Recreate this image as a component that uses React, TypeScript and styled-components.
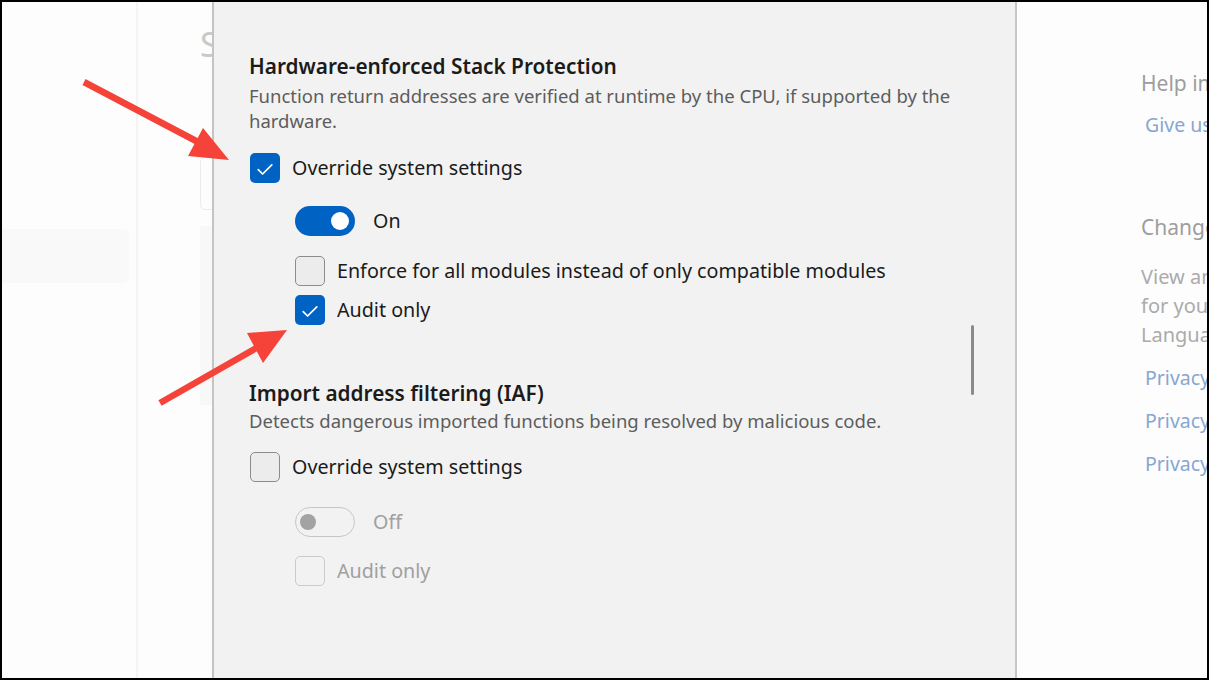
import React from "react";
import styled, { createGlobalStyle } from "styled-components";

const GlobalStyle = createGlobalStyle`
  html, body { margin: 0; padding: 0; background: #000; }
  body { font-family: "Noto Sans", "Open Sans", sans-serif; overflow: hidden; }
  * { box-sizing: border-box; }
`;

const Stage = styled.div`
  position: relative;
  width: 1209px;
  height: 680px;
  overflow: hidden;
`;

const Frame = styled.div`
  width: 100%;
  height: 100%;
  border: 2px solid #000;
  background: #fdfdfd;
  display: grid;
  grid-template-columns: 210px 805px 1fr;
  overflow: hidden;
`;

/* ---------- left backdrop ---------- */
const Backdrop = styled.div`
  display: flex;
  overflow: hidden;
`;

const Nav = styled.nav`
  flex: 0 0 134px;
  padding-top: 227px;
`;

const NavCard = styled.div`
  width: 127px;
  height: 54px;
  background: #f9f9f9;
  border-radius: 0 6px 6px 0;
`;

const Divider = styled.div`
  flex: 0 0 2px;
  background: #f4f4f4;
`;

const Main = styled.main`
  flex: 0 0 420px;
  padding: 22px 0 0 62px;
  display: flex;
  flex-direction: column;
`;

const PageTitle = styled.h1`
  margin: 0;
  font-size: 34px;
  line-height: 40px;
  font-weight: 400;
  color: #c9c9c9;
  white-space: nowrap;
`;

const SearchBox = styled.div`
  margin-top: 93px;
  width: 300px;
  height: 53px;
  border: 1px solid #ececec;
  border-radius: 5px;
`;

const GhostPanel = styled.div`
  margin-top: 16px;
  width: 300px;
  height: 179px;
  background: #f8f8f8;
`;

/* ---------- dialog ---------- */
const Dialog = styled.section`
  position: relative;
  background: #f2f2f2;
  border-left: 2px solid #c4c4c4;
  border-right: 2px solid #c6c6c6;
  padding: 50px 0 0 35px;
  overflow: hidden;
`;

const Section = styled.div<{ $mt?: number }>`
  display: flex;
  flex-direction: column;
  margin-top: ${(p) => p.$mt ?? 0}px;
`;

const Heading = styled.h2`
  margin: 0;
  font-size: 20.8px;
  line-height: 28px;
  font-weight: 600;
  color: #1b1b1b;
`;

const Desc = styled.p<{ $mt?: number }>`
  margin: ${(p) => p.$mt ?? 0}px 0 0;
  max-width: 712px;
  font-size: 18.5px;
  line-height: 25px;
  color: #5d5d5d;
`;

const Sub = styled.div`
  display: flex;
  flex-direction: column;
  padding-left: 46px;
`;

const Row = styled.label<{ $mt?: number; $gap?: number }>`
  display: flex;
  align-items: center;
  gap: ${(p) => p.$gap ?? 12}px;
  margin-top: ${(p) => p.$mt ?? 0}px;
  height: 30px;
`;

const Label = styled.span<{ $disabled?: boolean }>`
  font-size: 19.7px;
  line-height: 30px;
  color: ${(p) => (p.$disabled ? "#a0a0a0" : "#1b1b1b")};
  white-space: nowrap;
`;

const Box = styled.span<{ $checked?: boolean; $disabled?: boolean; $nudge?: number }>`
  flex: 0 0 30px;
  width: 30px;
  height: 30px;
  margin-left: ${(p) => p.$nudge ?? 0}px;
  border-radius: 5px;
  display: flex;
  align-items: center;
  justify-content: center;
  background: ${(p) => (p.$checked ? "#0063c4" : p.$disabled ? "transparent" : "#ececec")};
  border: ${(p) =>
    p.$checked ? "none" : `1.5px solid ${p.$disabled ? "#cbcbcb" : "#8c8c8c"}`};
`;

const Toggle = styled.span<{ $on?: boolean; $disabled?: boolean }>`
  flex: 0 0 60px;
  width: 60px;
  height: 30px;
  border-radius: 15px;
  display: flex;
  align-items: center;
  justify-content: ${(p) => (p.$on ? "flex-end" : "flex-start")};
  padding: ${(p) => (p.$on ? "0 6px" : "0 3.5px")};
  background: ${(p) => (p.$on ? "#0063c4" : "transparent")};
  border: ${(p) =>
    p.$on ? "none" : `1.5px solid ${p.$disabled ? "#c6c6c6" : "#8c8c8c"}`};
`;

const Thumb = styled.span<{ $on?: boolean; $disabled?: boolean }>`
  width: ${(p) => (p.$on ? 18 : 16)}px;
  height: ${(p) => (p.$on ? 18 : 16)}px;
  border-radius: 50%;
  background: ${(p) => (p.$on ? "#ffffff" : p.$disabled ? "#a3a3a3" : "#5d5d5d")};
`;

const Warning = styled.p`
  margin: 87px 0 0;
  font-size: 18.5px;
  line-height: 25px;
  color: #c42b1c;
  white-space: nowrap;
`;

const ScrollThumb = styled.div`
  position: absolute;
  left: 757px;
  top: 323px;
  width: 3px;
  height: 70px;
  border-radius: 2px;
  background: #8a8a8a;
`;

/* ---------- right backdrop ---------- */
const Aside = styled.aside`
  padding: 67px 0 0 124px;
  display: flex;
  flex-direction: column;
  overflow: hidden;
  white-space: nowrap;
`;

const AsideTitle = styled.div<{ $mt?: number }>`
  margin-top: ${(p) => p.$mt ?? 0}px;
  font-size: 21px;
  line-height: 28px;
  color: #9d9d9d;
`;

const AsideText = styled.div<{ $mt?: number }>`
  margin-top: ${(p) => p.$mt ?? 0}px;
  font-size: 20px;
  line-height: 29px;
  color: #ababab;
`;

const AsideLink = styled.a<{ $mt?: number }>`
  margin-top: ${(p) => p.$mt ?? 0}px;
  margin-left: 4px;
  font-size: 19.5px;
  line-height: 28px;
  color: #88a6d2;
  text-decoration: none;
`;

/* ---------- overlay arrows ---------- */
const Overlay = styled.svg`
  position: absolute;
  left: 0;
  top: 0;
  pointer-events: none;
`;

const Check = () => (
  <svg width="30" height="30" viewBox="0 0 30 30" aria-hidden="true">
    <path d="M8.2 16.6 L12.6 21 L21.8 11.8" fill="none" stroke="#fff" strokeWidth="1.7" strokeLinecap="round" strokeLinejoin="round" />
  </svg>
);

type CheckProps = { checked?: boolean; disabled?: boolean; label: string; mt?: number; nudge?: number };

const CheckOption = ({ checked, disabled, label, mt, nudge }: CheckProps) => (
  <Row $mt={mt}>
    <Box $checked={checked} $disabled={disabled} $nudge={nudge}>
      {checked && <Check />}
    </Box>
    <Label $disabled={disabled}>{label}</Label>
  </Row>
);

type ToggleProps = { on?: boolean; disabled?: boolean; mt?: number };

const ToggleOption = ({ on, disabled, mt }: ToggleProps) => (
  <Row $mt={mt} $gap={18}>
    <Toggle $on={on} $disabled={disabled}>
      <Thumb $on={on} $disabled={disabled} />
    </Toggle>
    <Label $disabled={disabled}>{on ? "On" : "Off"}</Label>
  </Row>
);

export default function App() {
  return (
    <Stage>
      <GlobalStyle />
      <Frame>
        <Backdrop>
          <Nav>
            <NavCard />
          </Nav>
          <Divider />
          <Main>
            <PageTitle>Settings</PageTitle>
            <SearchBox />
            <GhostPanel />
          </Main>
        </Backdrop>

        <Dialog>
          <Section>
            <Heading>Hardware-enforced Stack Protection</Heading>
            <Desc $mt={3}>
              Function return addresses are verified at runtime by the CPU, if supported by the hardware.
            </Desc>
            <CheckOption checked label="Override system settings" mt={20} nudge={1} />
            <Sub>
              <ToggleOption on mt={23} />
              <CheckOption label="Enforce for all modules instead of only compatible modules" mt={20} />
              <CheckOption checked label="Audit only" mt={9} />
            </Sub>
          </Section>

          <Section $mt={54}>
            <Heading>Import address filtering (IAF)</Heading>
            <Desc $mt={1}>Detects dangerous imported functions being resolved by malicious code.</Desc>
            <CheckOption label="Override system settings" mt={19} nudge={1} />
            <Sub>
              <ToggleOption disabled mt={25} />
              <CheckOption disabled label="Audit only" mt={19} />
            </Sub>
            <Warning>Changes to this setting require you to restart the program.</Warning>
          </Section>
          <ScrollThumb />
        </Dialog>

        <Aside>
          <AsideTitle>Help improve Windows Security</AsideTitle>
          <AsideLink $mt={14} href="#">Give us feedback</AsideLink>
          <AsideTitle $mt={74}>Change your privacy settings</AsideTitle>
          <AsideText $mt={21}>View and change privacy settings</AsideText>
          <AsideText>for your Windows 11 Pro device.</AsideText>
          <AsideText>Language and region settings</AsideText>
          <AsideLink $mt={15} href="#">Privacy settings</AsideLink>
          <AsideLink $mt={15} href="#">Privacy dashboard</AsideLink>
          <AsideLink $mt={15} href="#">Privacy Statement</AsideLink>
        </Aside>
      </Frame>

      <Overlay width="1209" height="680" viewBox="0 0 1209 680">
        <line x1="84" y1="82" x2="198" y2="142" stroke="#f5433a" strokeWidth="6.5" />
        <polygon points="203,128 188,156 229,160" fill="#f5433a" />
        <line x1="160" y1="403" x2="258" y2="347" stroke="#f5433a" strokeWidth="6.5" />
        <polygon points="247,333 263,363 287,330" fill="#f5433a" />
      </Overlay>
    </Stage>
  );
}
